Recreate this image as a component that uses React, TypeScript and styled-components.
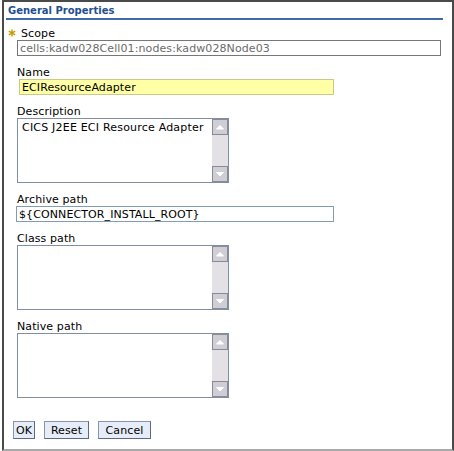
import React from 'react';
import styled, { createGlobalStyle } from 'styled-components';

const GlobalStyle = createGlobalStyle`
  html, body { margin: 0; padding: 0; background: #fff; }
  body {
    font-family: "DejaVu Sans", Verdana, sans-serif;
    font-size: 11px;
    letter-spacing: 0.1px;
    color: #000;
  }
`;

function Star() {
  return (
    <StarIcon viewBox="0 0 8 8" width="8" height="8">
      <path d="M4 0.5V7.5M0.8 2.2L7.2 5.8M0.8 5.8L7.2 2.2" stroke="#c79a00" strokeWidth="1.4" />
    </StarIcon>
  );
}

function Arrow({ dir }: { dir: 'up' | 'down' }) {
  return (
    <ArrowButton>
      <svg viewBox="0 0 14 14" width="14" height="14">
        {dir === 'up' ? (
          <path d="M3.5 9L7 5.5L10.5 9Z" fill="#fff" stroke="#fff" strokeLinejoin="round" />
        ) : (
          <path d="M3.5 5.5L7 9L10.5 5.5Z" fill="#fff" stroke="#fff" strokeLinejoin="round" />
        )}
      </svg>
    </ArrowButton>
  );
}

function Memo({ children }: { children?: React.ReactNode }) {
  return (
    <MemoBox>
      <MemoText>{children}</MemoText>
      <Scrollbar>
        <Arrow dir="up" />
        <Track />
        <Arrow dir="down" />
      </Scrollbar>
    </MemoBox>
  );
}

export default function App() {
  return (
    <>
      <GlobalStyle />
      <Frame>
        <Title>General Properties</Title>
        <Form>
          <Field>
            <Label $required>
              <Star />
              Scope
            </Label>
            <Input $width={424} $tone="readonly" readOnly defaultValue="cells:kadw028Cell01:nodes:kadw028Node03" />
          </Field>
          <Field>
            <Label>Name</Label>
            <Input $width={315} $offset={2} $tone="focus" defaultValue="ECIResourceAdapter" />
          </Field>
          <Field>
            <Label>Description</Label>
            <Memo>CICS J2EE ECI Resource Adapter</Memo>
          </Field>
          <Field>
            <Label>Archive path</Label>
            <Input $width={318} $offset={-1} defaultValue="${CONNECTOR_INSTALL_ROOT}" />
          </Field>
          <Field>
            <Label>Class path</Label>
            <Memo />
          </Field>
          <Field>
            <Label>Native path</Label>
            <Memo />
          </Field>
        </Form>
        <Buttons>
          <Button $width={22}>OK</Button>
          <Button $width={45}>Reset</Button>
          <Button $width={53}>Cancel</Button>
        </Buttons>
      </Frame>
    </>
  );
}

const Frame = styled.div`
  margin-left: 2px;
  width: 452px;
  height: 451px;
  box-sizing: border-box;
  border: 2px solid #4a4a4a;
  border-bottom-color: #a9a9a9;
  display: flex;
  flex-direction: column;
`;

const Title = styled.div`
  margin: 0 9px 0 2px;
  padding: 2px 0 0 2px;
  line-height: 14px;
  font-size: 10px;
  letter-spacing: 0;
  font-weight: bold;
  color: #22508f;
  border-bottom: 2px solid #3f6ca6;
`;

const Form = styled.div`
  display: flex;
  flex-direction: column;
  padding-left: 13px;
`;

const Field = styled.div`
  display: flex;
  flex-direction: column;
  align-items: flex-start;
  margin-top: 10px;

  &:first-child {
    margin-top: 7px;
  }
`;

const Label = styled.div<{ $required?: boolean }>`
  display: flex;
  align-items: center;
  line-height: 13px;
  height: 13px;
  margin-left: ${(p) => (p.$required ? '-9px' : '0')};
`;

const StarIcon = styled.svg`
  margin-right: 5px;
  margin-top: -2px;
`;

const Input = styled.input<{ $width: number; $offset?: number; $tone?: 'readonly' | 'focus' }>`
  box-sizing: border-box;
  width: ${(p) => p.$width}px;
  height: 16px;
  margin: 0 0 0 ${(p) => p.$offset ?? 0}px;
  padding: 0 2px;
  font-family: "DejaVu Sans", Verdana, sans-serif;
  font-size: 11px;
  letter-spacing: 0.1px;
  line-height: 14px;
  outline: none;
  border: 1px solid
    ${(p) => (p.$tone === 'readonly' ? '#777' : p.$tone === 'focus' ? '#c9c98a' : '#7f9db9')};
  background: ${(p) => (p.$tone === 'focus' ? '#ffffa6' : '#fff')};
  color: ${(p) => (p.$tone === 'readonly' ? '#6b6b6b' : '#000')};
`;

const MemoBox = styled.div`
  box-sizing: border-box;
  width: 212px;
  height: 65px;
  border: 1px solid #7f8fa6;
  display: flex;
  background: #fff;
`;

const MemoText = styled.div`
  flex: 1;
  padding: 2px 4px;
  line-height: 13px;
  letter-spacing: 0.2px;
  white-space: nowrap;
  overflow: hidden;
`;

const Scrollbar = styled.div`
  width: 16px;
  display: flex;
  flex-direction: column;
  background: #e4e1e6;
`;

const ArrowButton = styled.div`
  box-sizing: border-box;
  width: 16px;
  height: 16px;
  border: 1px solid #8a8a92;
  background: #cfcdd6;
  display: flex;
  align-items: center;
  justify-content: center;
`;

const Track = styled.div`
  flex: 1;
`;

const Buttons = styled.div`
  display: flex;
  gap: 9px;
  margin-top: 23px;
  padding-left: 9px;
`;

const Button = styled.button<{ $width: number }>`
  box-sizing: border-box;
  width: ${(p) => p.$width}px;
  height: 18px;
  padding: 0;
  font-family: "DejaVu Sans", Verdana, sans-serif;
  font-size: 11px;
  letter-spacing: 0.1px;
  color: #000;
  background: #e6edf8;
  border: 1px solid #8794ab;
  border-right-color: #5d6a80;
  border-bottom-color: #5d6a80;
`;
